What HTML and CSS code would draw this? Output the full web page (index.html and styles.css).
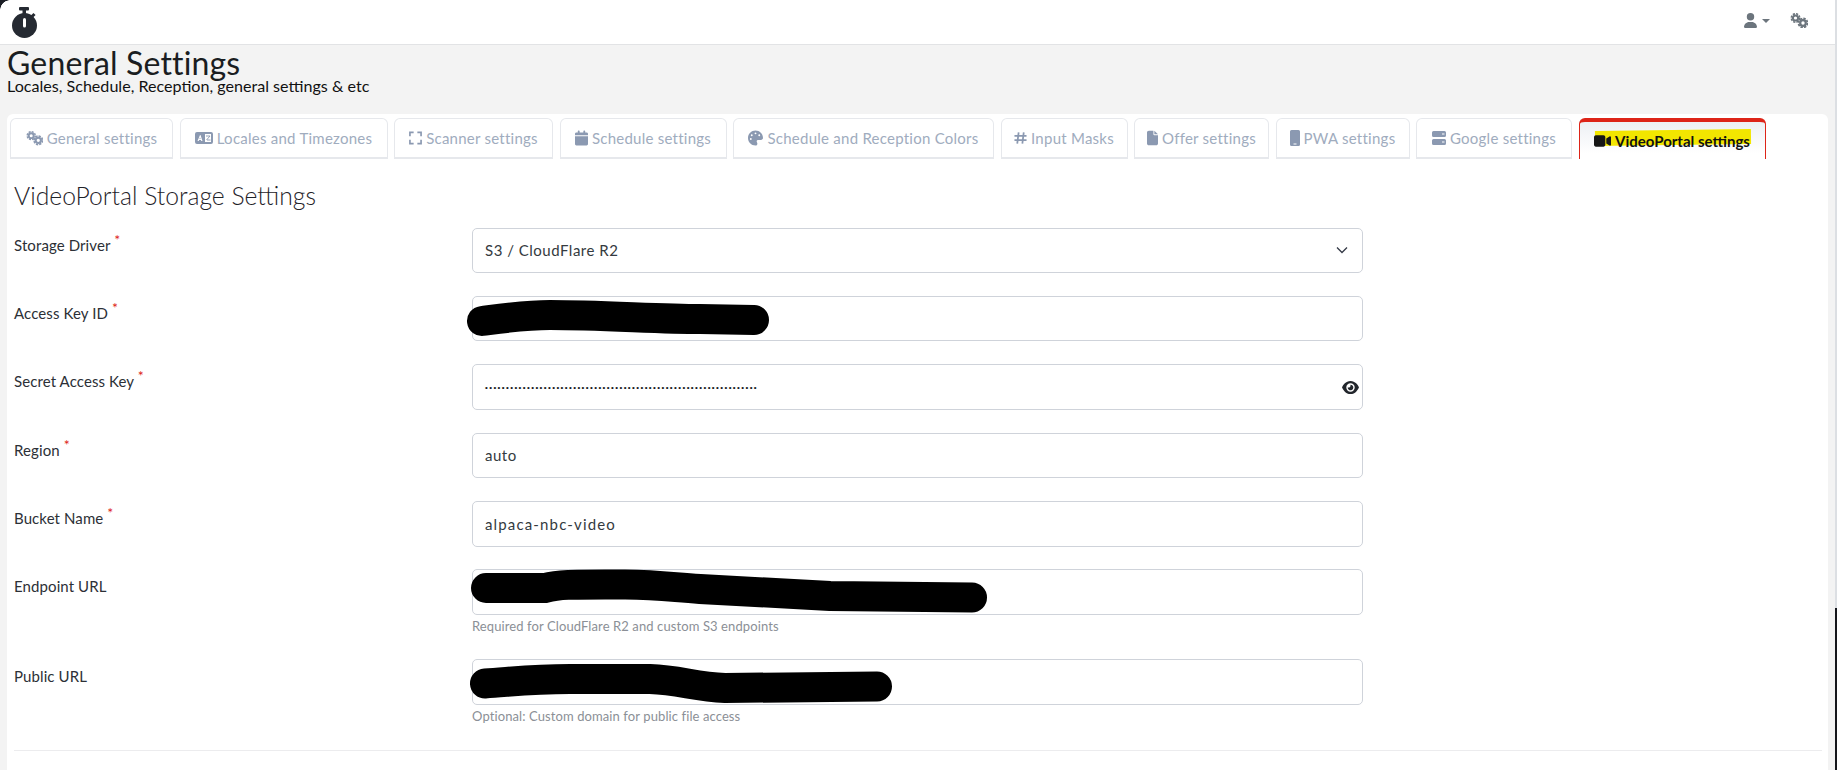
FILE: index.html
```html
<!DOCTYPE html>
<html lang="en">
<head>
<meta charset="utf-8">
<title>General Settings</title>
<link rel="stylesheet" href="styles.css">
</head>
<body>
<svg class="sprite" width="0" height="0">
  <symbol id="i-cogs" viewBox="0 0 18 15">
    <circle cx="5.500" cy="5" r="2.600" fill="none" stroke="currentColor" stroke-width="2"/>
    <circle cx="5.500" cy="5" r="4.200" fill="none" stroke="currentColor" stroke-width="1.600" stroke-dasharray="2.200 1.100"/>
    <circle cx="13" cy="10" r="2.800" fill="none" stroke="currentColor" stroke-width="2.200"/>
    <circle cx="13" cy="10" r="4.500" fill="none" stroke="currentColor" stroke-width="1.800" stroke-dasharray="2.400 1.100"/>
  </symbol>
  <symbol id="i-lang" viewBox="0 0 18 12">
    <path fill="currentColor" fill-rule="evenodd" d="M2 0h14a2 2 0 0 1 2 2v8a2 2 0 0 1-2 2H2a2 2 0 0 1-2-2V2a2 2 0 0 1 2-2zM10 2v8h6V2zM5 3 2.500 9h1.200l.4-1h1.800l.4 1H7.500L5.500 3zM4.500 7 5 5.200 5.600 7z"/>
    <path fill="none" stroke="currentColor" stroke-width=".9" d="M11 4h4M15 4l-3.500 4M12 8h3.500"/>
  </symbol>
  <symbol id="i-scan" viewBox="0 0 14 14">
    <path fill="none" stroke="currentColor" stroke-width="1.800" d="M1 5V1h4M9 1h4v4M13 9v4H9M5 13H1V9"/>
  </symbol>
  <symbol id="i-cal" viewBox="0 0 448 512"><path fill="currentColor" d="M96 32V64H48C21.500 64 0 85.500 0 112v48H448V112c0-26.500-21.500-48-48-48H352V32c0-17.700-14.300-32-32-32s-32 14.300-32 32V64H160V32c0-17.700-14.300-32-32-32S96 14.300 96 32zM448 192H0V464c0 26.500 21.500 48 48 48H400c26.500 0 48-21.500 48-48V192z"/></symbol>
  <symbol id="i-palette" viewBox="0 0 512 512"><path fill="currentColor" d="M512 256c0 .9 0 1.800 0 2.700c-.4 36.500-33.600 61.300-70.100 61.300H344c-26.500 0-48 21.500-48 48c0 3.400 .4 6.700 1 9.900c2.100 10.200 6.500 20 10.800 29.900c6.100 13.800 12.100 27.500 12.100 42c0 31.800-21.600 60.700-53.400 62c-3.500 .1-7 .2-10.600 .2C114.600 512 0 397.400 0 256S114.600 0 256 0S512 114.600 512 256zM128 288a32 32 0 1 0 -64 0 32 32 0 1 0 64 0zm0-96a32 32 0 1 0 0-64 32 32 0 1 0 0 64zM288 96a32 32 0 1 0 -64 0 32 32 0 1 0 64 0zm96 96a32 32 0 1 0 0-64 32 32 0 1 0 0 64z"/></symbol>
  <symbol id="i-hash" viewBox="0 0 14 14"><path fill="none" stroke="currentColor" stroke-width="1.900" d="M5 1 3.500 13M10.500 1 9 13M.5 4.700H13.500M.5 9.300H13.500"/></symbol>
  <symbol id="i-file" viewBox="0 0 384 512"><path fill="currentColor" d="M0 64C0 28.700 28.700 0 64 0H224V128c0 17.700 14.300 32 32 32H384V448c0 35.300-28.700 64-64 64H64c-35.300 0-64-28.700-64-64V64zm384 64H256V0L384 128z"/></symbol>
  <symbol id="i-mobile" viewBox="0 0 10 16"><path fill="currentColor" fill-rule="evenodd" d="M1.500 0h7A1.500 1.500 0 0 1 10 1.500v13A1.500 1.500 0 0 1 8.500 16h-7A1.500 1.500 0 0 1 0 14.500v-13A1.500 1.500 0 0 1 1.500 0zM3.500 13.500v1h3v-1z"/></symbol>
  <symbol id="i-server" viewBox="0 0 14 14"><path fill="currentColor" fill-rule="evenodd" d="M1.500 0h11A1.500 1.500 0 0 1 14 1.500v3A1.500 1.500 0 0 1 12.500 6h-11A1.500 1.500 0 0 1 0 4.500v-3A1.500 1.500 0 0 1 1.500 0zM10 2.500v1h2.500v-1zM1.500 8h11A1.500 1.500 0 0 1 14 9.500v3a1.500 1.500 0 0 1-1.500 1.500h-11A1.500 1.500 0 0 1 0 12.500v-3A1.500 1.500 0 0 1 1.500 8zM10 10.500v1h2.500v-1z"/></symbol>
  <symbol id="i-video" viewBox="0 0 576 512"><path fill="currentColor" d="M0 128C0 92.700 28.700 64 64 64H320c35.300 0 64 28.700 64 64V384c0 35.300-28.700 64-64 64H64c-35.300 0-64-28.700-64-64V128zM559.100 99.800c10.400 5.600 16.900 16.400 16.900 28.200V384c0 11.800-6.500 22.600-16.900 28.200s-23 5-32.900-1.600l-96-64L416 337.100V320 192 174.900l14.200-9.500 96-64c9.800-6.500 22.400-7.200 32.900-1.600z"/></symbol>
</svg>

<div class="corner"></div>
<div class="edge"></div>

<header class="topbar">
  <svg class="logo" viewBox="0 0 26 31">
    <circle cx="12.500" cy="18.500" r="12.500" fill="#252a32"/>
    <rect x="7" y="0" width="10" height="3.500" rx="1" fill="#252a32"/>
    <rect x="10.500" y="3" width="3.500" height="4" fill="#252a32"/>
    <path d="M20 9.500 22.500 7" stroke="#252a32" stroke-width="3"/>
    <rect x="11" y="11" width="3" height="9.500" rx="1.500" fill="#fff"/>
  </svg>
  <div class="top-actions">
    <span class="user">
      <svg class="user-icon" viewBox="0 0 448 512"><path fill="currentColor" d="M224 256A128 128 0 1 0 224 0a128 128 0 1 0 0 256zm-45.700 48C79.800 304 0 383.800 0 482.300C0 498.700 13.300 512 29.700 512H418.300c16.400 0 29.700-13.300 29.700-29.700C448 383.800 368.200 304 269.700 304H178.300z"/></svg>
      <i class="caret"></i>
    </span>
    <svg class="top-cogs"><use href="#i-cogs"/></svg>
  </div>
</header>

<section class="page-head">
  <h1>General Settings</h1>
  <p>Locales, Schedule, Reception, general settings &amp; etc</p>
</section>

<main class="card">
  <nav class="tabs">
    <a class="tab t1"><svg class="ic w17"><use href="#i-cogs"/></svg>General settings</a>
    <a class="tab t2"><svg class="ic w18"><use href="#i-lang"/></svg>Locales and Timezones</a>
    <a class="tab t3"><svg class="ic w13"><use href="#i-scan"/></svg>Scanner settings</a>
    <a class="tab t4"><svg class="ic w13"><use href="#i-cal"/></svg>Schedule settings</a>
    <a class="tab t5"><svg class="ic w15"><use href="#i-palette"/></svg>Schedule and Reception Colors</a>
    <a class="tab t6"><svg class="ic w13"><use href="#i-hash"/></svg>Input Masks</a>
    <a class="tab t7"><svg class="ic w11"><use href="#i-file"/></svg>Offer settings</a>
    <a class="tab t8"><svg class="ic w10"><use href="#i-mobile"/></svg>PWA settings</a>
    <a class="tab t9"><svg class="ic w14"><use href="#i-server"/></svg>Google settings</a>
    <a class="tab active"><span class="mark"></span><svg class="ic w17"><use href="#i-video"/></svg><b>VideoPortal settings</b></a>
  </nav>

  <h2>VideoPortal Storage Settings</h2>

  <form class="form">
    <div class="row">
      <label>Storage Driver <sup>*</sup></label>
      <div class="field"><div class="control select">S3 / CloudFlare R2<svg class="chev" viewBox="0 0 12 8"><path d="M1 1.500 6 6.500 11 1.500" fill="none" stroke="#343a46" stroke-width="1.300"/></svg></div></div>
    </div>
    <div class="row">
      <label>Access Key ID <sup>*</sup></label>
      <div class="field"><div class="control"></div></div>
    </div>
    <div class="row">
      <label>Secret Access Key <sup>*</sup></label>
      <div class="field"><div class="control"><span class="dots">•••••••••••••••••••••••••••••••••••••••••••••••••••••••••••••••••</span><svg class="eye" viewBox="0 0 576 512"><path fill="#22262c" d="M288 32c-80.800 0-145.500 36.800-192.600 80.600C48.600 156 17.300 208 2.500 243.700c-3.300 7.900-3.300 16.700 0 24.600C17.300 304 48.600 356 95.400 399.400C142.500 443.200 207.200 480 288 480s145.500-36.800 192.600-80.600c46.800-43.500 78.100-95.400 92.900-131.100c3.300-7.900 3.300-16.700 0-24.600c-14.800-35.700-46.100-87.700-92.900-131.100C433.500 68.800 368.800 32 288 32zM144 256a144 144 0 1 1 288 0 144 144 0 1 1 -288 0zm144-64c0 35.300-28.700 64-64 64c-7.100 0-13.900-1.200-20.300-3.300c-5.500-1.800-11.900 1.600-11.700 7.400c.3 6.900 1.300 13.800 3.200 20.700c13.700 51.200 66.400 81.600 117.600 67.900s81.600-66.400 67.900-117.600c-11.100-41.500-47.800-69.400-88.600-71.100c-5.800-.2-9.200 6.100-7.400 11.700c2.100 6.400 3.300 13.200 3.300 20.300z"/></svg></div></div>
    </div>
    <div class="row">
      <label>Region <sup>*</sup></label>
      <div class="field"><div class="control">auto</div></div>
    </div>
    <div class="row">
      <label>Bucket Name <sup>*</sup></label>
      <div class="field"><div class="control wide">alpaca-nbc-video</div></div>
    </div>
    <div class="row hinted">
      <label>Endpoint URL</label>
      <div class="field"><div class="control"></div><small>Required for CloudFlare R2 and custom S3 endpoints</small></div>
    </div>
    <div class="row hinted">
      <label>Public URL</label>
      <div class="field"><div class="control"></div><small>Optional: Custom domain for public file access</small></div>
    </div>
  </form>
  <hr>
</main>

<svg class="scribbles" viewBox="0 0 1837 770">
  <g fill="none" stroke="#000" stroke-width="30" stroke-linecap="round" stroke-linejoin="round">
    <path d="M482 321C505 318 525 315 550 315C600 315 660 319 700 319L754 320"/>
    <path d="M486 588L545 588C560 584 575 584.500 625 584.500C660 585 670 587 700 589C750 592 790 594 830 596L972 597.500"/>
    <path d="M485 683.500C510 682 530 679 570 679L650 679C680 680 695 687 725 688L877 686.500"/>
  </g>
</svg>
</body>
</html>
```

FILE: styles.css
```css
* { box-sizing: border-box; }
html, body { margin: 0; height: 770px; overflow: hidden; }
body {
  background: #f3f3f3;
  font-family: "Lato", "Liberation Sans", sans-serif;
  color: #1f2329;
  position: relative;
}
.sprite { position: absolute; }
.corner {
  position: absolute; left: 0; top: 0; width: 10px; height: 10px;
  background: radial-gradient(circle at 100% 100%, transparent 9.500px, #1c1f26 10px);
  z-index: 5;
}
.edge {
  position: absolute; right: 0; top: 0; width: 2px; height: 770px;
  background: linear-gradient(#dcdfe3 0 608px, #14161b 608px);
  z-index: 5;
}
.topbar {
  height: 45px;
  background: #fff;
  border-bottom: 1px solid #e2e3e5;
  display: flex;
  align-items: center;
  justify-content: space-between;
  padding: 0 29px 0 12px;
}
.logo { width: 26px; height: 31px; display: block; }
.top-actions { display: flex; align-items: center; gap: 20px; color: #6c757d; margin-top: -3px; }
.user { display: flex; align-items: center; gap: 5px; }
.user-icon { width: 13px; height: 15px; display: block; }
.caret { width: 0; height: 0; border: 4px solid transparent; border-top: 4px solid #6c757d; border-bottom: 0; }
.top-cogs { width: 18px; height: 15px; display: block; }
.page-head { padding: 3px 7px 0; height: 69px; }
.page-head h1 {
  margin: 0;
  font-size: 32px; line-height: 29px; font-weight: 400; color: #1a1d21;
  letter-spacing: .15px;
}
.page-head p { margin: 0; font-size: 16.100px; line-height: 17px; color: #111; }
.card {
  background: #fff;
  margin: 0 9px 0 7px;
  border-radius: 6px 6px 0 0;
  padding: 4px 6px 0 3px;
  height: 656px;
}
.tabs { display: flex; gap: 6.500px; height: 41px; }
.tab {
  position: relative;
  display: flex; align-items: center; justify-content: center; gap: 4px;
  height: 41px;
  border: 1px solid #e6e8ec;
  border-bottom-width: 2px;
  border-radius: 6px 6px 0 0;
  font-size: 15px;
  letter-spacing: .25px;
  color: #a0acbe;
  white-space: nowrap;
}
.t1 { width: 163px; } .t2 { width: 208px; } .t3 { width: 159px; }
.t4 { width: 167px; } .t5 { width: 261px; } .t6 { width: 127px; }
.t7 { width: 135px; } .t8 { width: 134px; } .t9 { width: 156px; }
.ic { height: 16px; color: #8b99b1; display: block; flex: none; }
.w10 { width: 10px; } .w11 { width: 11px; } .w13 { width: 13px; }
.w14 { width: 14px; } .w15 { width: 15px; } .w17 { width: 17px; } .w18 { width: 18px; }
.active {
  width: 187px;
  border: 1px solid #dd2418;
  border-top-width: 4px;
  border-bottom: 0;
  background: linear-gradient(#edf0f4, #fff 85%);
  color: #111;
  padding-top: 1px;
}
.active b { font-weight: 700; position: relative; letter-spacing: 0; }
.active .ic { color: #161616; position: relative; }
.mark {
  position: absolute; left: 15px; top: 8px; width: 156px; height: 15px;
  background: #f2e600;
  transform: rotate(-0.8deg);
}
h2 {
  margin: 23px 0 0; padding-left: 4px;
  font-size: 24.700px; line-height: 28px; font-weight: 300; color: #1f2329;
}
.form { margin-top: 17.500px; }
.row { display: flex; height: 68.400px; padding-left: 4px; }
.row.hinted { height: 90px; }
label { width: 458px; flex: none; font-size: 15px; letter-spacing: .1px; line-height: 18px; padding-top: 8px; color: #2c3036; font-weight: 400; }
sup { color: #dd2418; font-size: 14px; line-height: 0; }
.field { width: 891px; flex: none; }
.control {
  height: 45.500px;
  border: 1px solid #cfd3da;
  border-radius: 5px;
  display: flex; align-items: center; justify-content: space-between;
  padding: 0 3px 0 12px;
  font-size: 15px;
  letter-spacing: .5px;
  color: #343a40;
  background: #fff;
}
.control.wide { letter-spacing: 1.150px; }
.select { padding-right: 14px; }
.chev { width: 12px; height: 8px; display: block; }
.dots { font-size: 8px; letter-spacing: 1.400px; color: #15181c; font-family: "Liberation Sans", sans-serif; }
.eye { width: 17px; height: 15px; display: block; margin-right: 0; }
small { display: block; font-size: 13px; letter-spacing: .1px; line-height: 15px; padding-top: 4px; color: #8b8f96; }
hr { border: 0; border-top: 1px solid #ececee; margin: 0; position: absolute; left: 14px; width: 1808px; top: 750px; }
.scribbles { position: absolute; left: 0; top: 0; width: 1837px; height: 770px; pointer-events: none; }
```
